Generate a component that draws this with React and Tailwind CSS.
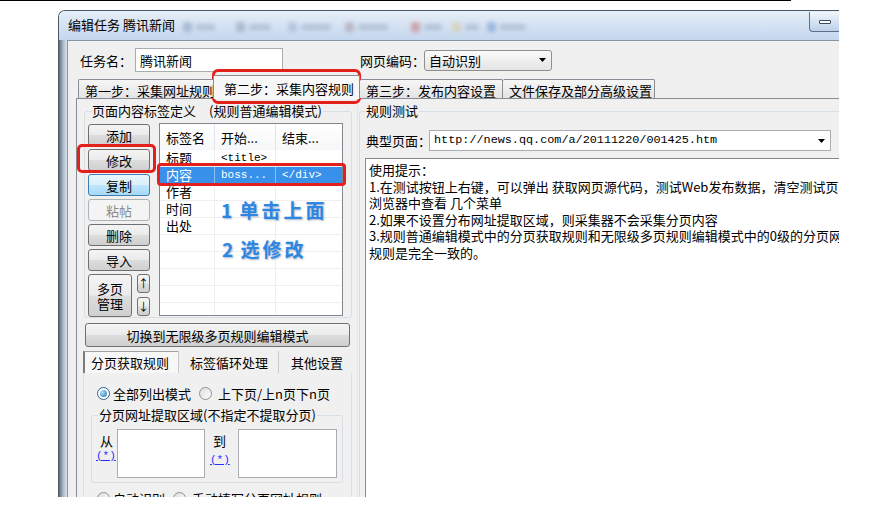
import React from 'react';

const btnStyles = {
  normal: 'border-[#707070] bg-[linear-gradient(#f4f4f4,#ebebeb_48%,#dddddd_52%,#cfcfcf)] text-black',
  hot: 'border-[#3c7fb1] bg-[linear-gradient(#eaf6fd,#d9f0fc_48%,#bee6fd_52%,#a7d9f5)] text-black',
  disabled: 'border-[#adb2b5] bg-[#f4f4f4] text-[#8d8d8d]',
};

const Btn = ({ children, variant = 'normal', className = '' }) => (
  <div className={`flex shrink-0 items-center justify-center rounded-[3px] border ${btnStyles[variant]} ${className}`}>
    {children}
  </div>
);

const Radio = ({ checked }) => (
  <span
    className={`flex h-[13px] w-[13px] shrink-0 items-center justify-center rounded-full border ${
      checked ? 'border-[#2c628b] bg-white' : 'border-[#8e8f8f] bg-linear-to-br from-[#dcdcdc] to-white'
    }`}
  >
    {checked && <span className="h-[7px] w-[7px] rounded-full bg-[radial-gradient(circle_at_35%_35%,#b4e2fa,#1f6fb5)]" />}
  </span>
);

const Arrow = () => (
  <svg width="7" height="4" viewBox="0 0 7 4">
    <path d="M0 0h7L3.5 4z" fill="#000" />
  </svg>
);

const rows = [
  { name: '标题', start: '<title>', end: '' },
  { name: '内容', start: 'boss...', end: '</div>', selected: true },
  { name: '作者', start: '', end: '' },
  { name: '时间', start: '', end: '' },
  { name: '出处', start: '', end: '' },
  { name: '', start: '', end: '' },
  { name: '', start: '', end: '' },
  { name: '', start: '', end: '' },
  { name: '', start: '', end: '' },
  { name: '', start: '', end: '' },
];

const tips = [
  '使用提示：',
  '1.在测试按钮上右键，可以弹出 获取网页源代码，测试Web发布数据，清空测试页网址',
  '浏览器中查看 几个菜单',
  '2.如果不设置分布网址提取区域，则采集器不会采集分页内容',
  '3.规则普通编辑模式中的分页获取规则和无限级多页规则编辑模式中的0级的分页网址',
  '规则是完全一致的。',
];

// blurred toolbar behind the title (out of focus in the screenshot)
const blobs = [
  { ml: 'ml-[8px]', icon: 'bg-[#6f88aa]', text: 'w-[19px]' },
  { ml: 'ml-[21px]', icon: 'bg-[#7b8798]', text: 'w-[22px]' },
  { ml: 'ml-[17px]', icon: 'bg-[#8aa0bd]', text: 'w-[30px]' },
  { ml: 'ml-[14px]', icon: 'bg-[#9a7f8a]', text: 'w-[30px]' },
  { ml: 'ml-[23px]', icon: 'bg-[#c0504d]', text: 'w-[18px]' },
  { ml: 'ml-[10px]', icon: 'bg-[#d8c27a]', text: 'w-[14px]' },
  { ml: 'ml-[8px]', icon: 'bg-[#4f7fc4]', text: 'w-[26px]' },
];

const App = () => {
  return (
    <div className="relative h-[506px] w-[893px] overflow-hidden bg-white font-['Noto_Sans_CJK_SC','Noto_Sans',sans-serif] text-[13px] leading-none text-black">
      <div className="h-px w-[791px] bg-black" />

      <div className="ml-[58px] mt-[9px] flex h-[487px] w-[781px] flex-col overflow-hidden rounded-tl-[7px] border-l border-t border-[#4d5866]">
        {/* title bar */}
        <div className="flex h-[29px] shrink-0 items-start bg-linear-to-b from-[#e6eef8] to-[#c4d7ee]">
          <div className="ml-[9px] mt-[7px] whitespace-nowrap leading-[14px]">编辑任务 腾讯新闻</div>
          <div className="mt-[11px] flex items-center opacity-60 blur-[2px]">
            {blobs.map((b, i) => (
              <div key={i} className={`flex items-center gap-[4px] ${b.ml}`}>
                <span className={`h-[10px] w-[9px] rounded-[2px] opacity-70 ${b.icon}`} />
                <span className={`h-[6px] rounded-[2px] bg-[#7d8ea5] opacity-60 ${b.text}`} />
              </div>
            ))}
          </div>
          <div className="ml-auto mt-px flex h-[20px] w-[30px] items-center justify-center rounded-bl-[4px] border-b border-l border-[#5f6f85] bg-linear-to-b from-[#f2f6fb] to-[#bcd1ea]">
            <span className="h-[4px] w-[12px] rounded-[1px] border border-[#3d4a5c] bg-white" />
          </div>
        </div>

        <div className="flex min-h-0 flex-1">
          <div className="w-[8px] shrink-0 bg-linear-to-r from-[#5e6a78] via-[#a9b7c6] to-[#dbe5ef]" />

          {/* client area */}
          <div className="flex min-w-0 flex-1 flex-col border-l border-t border-[#8594a5] bg-[#f0f0f0]">
            <div className="mt-[7px] flex h-[24px] items-center pl-[12px]">
              <span className="w-[55px] shrink-0 whitespace-nowrap">任务名：</span>
              <div className="flex h-[24px] w-[148px] items-center border border-[#abadb3] bg-white pl-[4px]">腾讯新闻</div>
              <span className="ml-[77px] w-[64px] shrink-0 whitespace-nowrap">网页编码：</span>
              <div className="flex h-[21px] w-[128px] items-center justify-between rounded-[3px] border border-[#8f8f8f] bg-linear-to-b from-[#fafafa] to-[#e4e4e4] pl-[4px] pr-[5px]">
                <span>自动识别</span>
                <Arrow />
              </div>
            </div>

            {/* step tabs */}
            <div className="relative z-10 mt-[3px] flex h-[23px] items-end pl-[10px]">
              <div className="h-[19px] w-[144px] shrink-0 overflow-hidden whitespace-nowrap rounded-t-[2px] border border-b-0 border-[#898c95] bg-linear-to-b from-[#f6f6f6] to-[#e3e3e3] pl-[6px] pt-[3px] leading-[15px]">
                第一步：采集网址规则
              </div>
              <div className="relative -mb-px -ml-[9px] h-[24px] w-[147px] shrink-0 whitespace-nowrap rounded-t-[2px] border border-b-0 border-[#898c95] bg-[#f7f7f7] pl-[10px] pt-[5px] leading-[15px]">
                第二步：采集内容规则
              </div>
              <div className="h-[19px] w-[143px] shrink-0 whitespace-nowrap rounded-t-[2px] border border-b-0 border-l-0 border-[#898c95] bg-linear-to-b from-[#f6f6f6] to-[#e3e3e3] pl-[6px] pt-[3px] leading-[15px]">
                第三步：发布内容设置
              </div>
              <div className="h-[19px] w-[152px] shrink-0 whitespace-nowrap rounded-t-[2px] border border-b-0 border-l-0 border-[#898c95] bg-linear-to-b from-[#f6f6f6] to-[#e3e3e3] pl-[6px] pt-[3px] leading-[15px]">
                文件保存及部分高级设置
              </div>
            </div>

            {/* tab page */}
            <div className="ml-[8px] flex min-h-0 flex-1 border-l border-t border-[#898c95]">
              {/* left column */}
              <div className="flex w-[280px] shrink-0 flex-col">
                <fieldset className="ml-[7px] mt-[5px] h-[216px] w-[268px] rounded-[3px] border border-[#d5dfe5]">
                  <legend className="ml-[6px] px-[1px] leading-[14px] whitespace-nowrap">页面内容标签定义　(规则普通编辑模式)</legend>
                  <div className="ml-[3px] flex items-start">
                    <div className="mt-[6px] flex w-[62px] flex-col gap-[3px]">
                      <Btn className="h-[22px]">添加</Btn>
                      <Btn className="h-[22px]">修改</Btn>
                      <Btn variant="hot" className="h-[22px]">复制</Btn>
                      <Btn variant="disabled" className="h-[22px]">粘帖</Btn>
                      <Btn className="h-[22px]">删除</Btn>
                      <Btn className="h-[22px]">导入</Btn>
                      <div className="flex">
                        <Btn className="h-[43px] w-[44px] flex-col text-center leading-[15px]">
                          <span>多页</span>
                          <span>管理</span>
                        </Btn>
                        <div className="ml-[5px] flex flex-col gap-[4px]">
                          <Btn className="h-[19px] w-[13px] text-[11px]">↑</Btn>
                          <Btn className="h-[19px] w-[13px] text-[11px]">↓</Btn>
                        </div>
                      </div>
                    </div>

                    <div className="ml-[9px] mt-[5px] h-[193px] w-[184px] overflow-hidden border border-[#828790] bg-white">
                      <div className="flex h-[26px] bg-linear-to-b from-white to-[#f6f7f8]">
                        <div className="w-[55px] border-r border-[#e2e4e7] pl-[6px] pt-[6px] leading-[15px]">标签名</div>
                        <div className="w-[61px] border-r border-[#e2e4e7] pl-[6px] pt-[6px] leading-[15px]">开始...</div>
                        <div className="flex-1 pl-[6px] pt-[6px] leading-[15px]">结束...</div>
                      </div>
                      {rows.map((r, i) => (
                        <div
                          key={i}
                          className={`flex h-[17px] border-b ${r.selected ? 'border-[#3790ea] bg-[#3790ea] text-white' : 'border-[#efefef]'}`}
                        >
                          <div className={`w-[55px] border-r pl-[6px] leading-[16px] ${r.selected ? 'border-[#8cc0f3]' : 'border-[#efefef]'}`}>{r.name}</div>
                          <div className={`w-[61px] border-r pl-[6px] font-['Liberation_Mono',monospace] text-[11px] leading-[16px] ${r.selected ? 'border-[#8cc0f3]' : 'border-[#efefef]'}`}>{r.start}</div>
                          <div className="flex-1 pl-[6px] font-['Liberation_Mono',monospace] text-[11px] leading-[16px]">{r.end}</div>
                        </div>
                      ))}
                    </div>
                  </div>
                </fieldset>

                <Btn className="ml-[8px] mt-[5px] h-[24px] w-[265px]">切换到无限级多页规则编辑模式</Btn>

                <div className="ml-[6px] mt-[4px] flex h-[22px] w-[269px] shrink-0 leading-[15px]">
                  <div className="flex w-[95px] items-center border-l-2 border-t border-l-[#7a7a7a] border-t-[#a0a0a0] bg-[#f7f7f7] pl-[6px]">分页获取规则</div>
                  <div className="flex w-[100px] items-center border-l border-[#c9c9c9] pl-[11px]">标签循环处理</div>
                  <div className="flex flex-1 items-center border-l border-[#c9c9c9] pl-[12px]">其他设置</div>
                </div>

                <div className="ml-[6px] flex w-[269px] flex-1 flex-col border-l border-r border-[#dedede]">
                  <div className="mt-[14px] flex h-[13px] items-center pl-[13px]">
                    <Radio checked />
                    <span className="ml-[3px]">全部列出模式</span>
                    <span className="ml-[8px]"><Radio /></span>
                    <span className="ml-[6px]">上下页/上n页下n页</span>
                  </div>

                  <fieldset className="ml-[7px] mt-[8px] h-[75px] w-[252px] shrink-0 rounded-[3px] border border-[#d5dfe5]">
                    <legend className="ml-[6px] px-[1px] leading-[14px] whitespace-nowrap">分页网址提取区域(不指定不提取分页)</legend>
                    <div className="flex items-start">
                      <div className="flex w-[25px] flex-col">
                        <span className="ml-[8px] mt-[12px] leading-[13px]">从</span>
                        <span className="ml-[4px] mt-[3px] font-['Liberation_Mono',monospace] text-[11px] leading-[13px] text-[#2a2aff] underline">(*)</span>
                      </div>
                      <div className="mt-[7px] h-[49px] w-[88px] border border-[#abadb3] bg-white" />
                      <div className="flex w-[33px] flex-col">
                        <span className="ml-[8px] mt-[12px] leading-[13px]">到</span>
                        <span className="ml-[5px] mt-[7px] font-['Liberation_Mono',monospace] text-[11px] leading-[13px] text-[#2a2aff] underline">(*)</span>
                      </div>
                      <div className="mt-[7px] h-[49px] w-[99px] border border-[#abadb3] bg-white" />
                    </div>
                  </fieldset>

                  <div className="mt-[9px] flex h-[13px] items-center pl-[13px]">
                    <Radio />
                    <span className="ml-[3px]">自动识别</span>
                    <span className="ml-[8px]"><Radio /></span>
                    <span className="ml-[6px]">手动填写分页网址规则</span>
                  </div>
                </div>
              </div>

              {/* right column */}
              <div className="min-w-0 flex-1 border-l border-[#dfe6ec]">
                <fieldset className="ml-px mt-[5px] h-[450px] w-[520px] rounded-[3px] border border-[#d5dfe5]">
                  <legend className="ml-[5px] px-[1px] leading-[14px]">规则测试</legend>
                  <div className="mt-[12px] flex h-[21px] items-center pl-[6px]">
                    <span className="w-[63px] shrink-0 whitespace-nowrap">典型页面：</span>
                    <div className="flex h-[21px] w-[402px] items-center justify-between border border-[#abadb3] bg-white pl-[4px] pr-[5px]">
                      <span className="font-['Liberation_Mono',monospace] text-[11.8px]">http://news.qq.com/a/20111220/001425.htm</span>
                      <Arrow />
                    </div>
                  </div>
                  <div className="ml-[5px] mt-[7px] h-[350px] w-[490px] overflow-hidden whitespace-nowrap border border-[#828790] bg-white pl-[3px] pt-[3px] leading-[16.6px]">
                    {tips.map((t, i) => (
                      <div key={i}>{t}</div>
                    ))}
                  </div>
                </fieldset>
              </div>
            </div>
          </div>
        </div>
      </div>

      {/* annotations drawn over the screenshot */}
      <div className="absolute left-[212px] top-[69px] h-[35px] w-[149px] rounded-[6px] border-[3px] border-[#e3201b]" />
      <div className="absolute left-[77px] top-[144px] h-[29px] w-[79px] rounded-[5px] border-[3px] border-[#e3201b]" />
      <div className="absolute left-[157px] top-[163px] h-[23px] w-[189px] rounded-[4px] border-[3px] border-[#e3201b]" />
      <div className="absolute left-[221px] top-[199px] whitespace-nowrap text-[19px] font-bold leading-[22px] tracking-[3px] text-[#2b87e3] [text-shadow:1px_1px_2px_rgba(0,30,90,0.35)]">
        1<span className="text-[6px]"> </span>单击上面
      </div>
      <div className="absolute left-[222px] top-[238px] whitespace-nowrap text-[19px] font-bold leading-[22px] tracking-[3px] text-[#2b87e3] [text-shadow:1px_1px_2px_rgba(0,30,90,0.35)]">
        2<span className="text-[6px]"> </span>选修改
      </div>
    </div>
  );
};

export default App;
